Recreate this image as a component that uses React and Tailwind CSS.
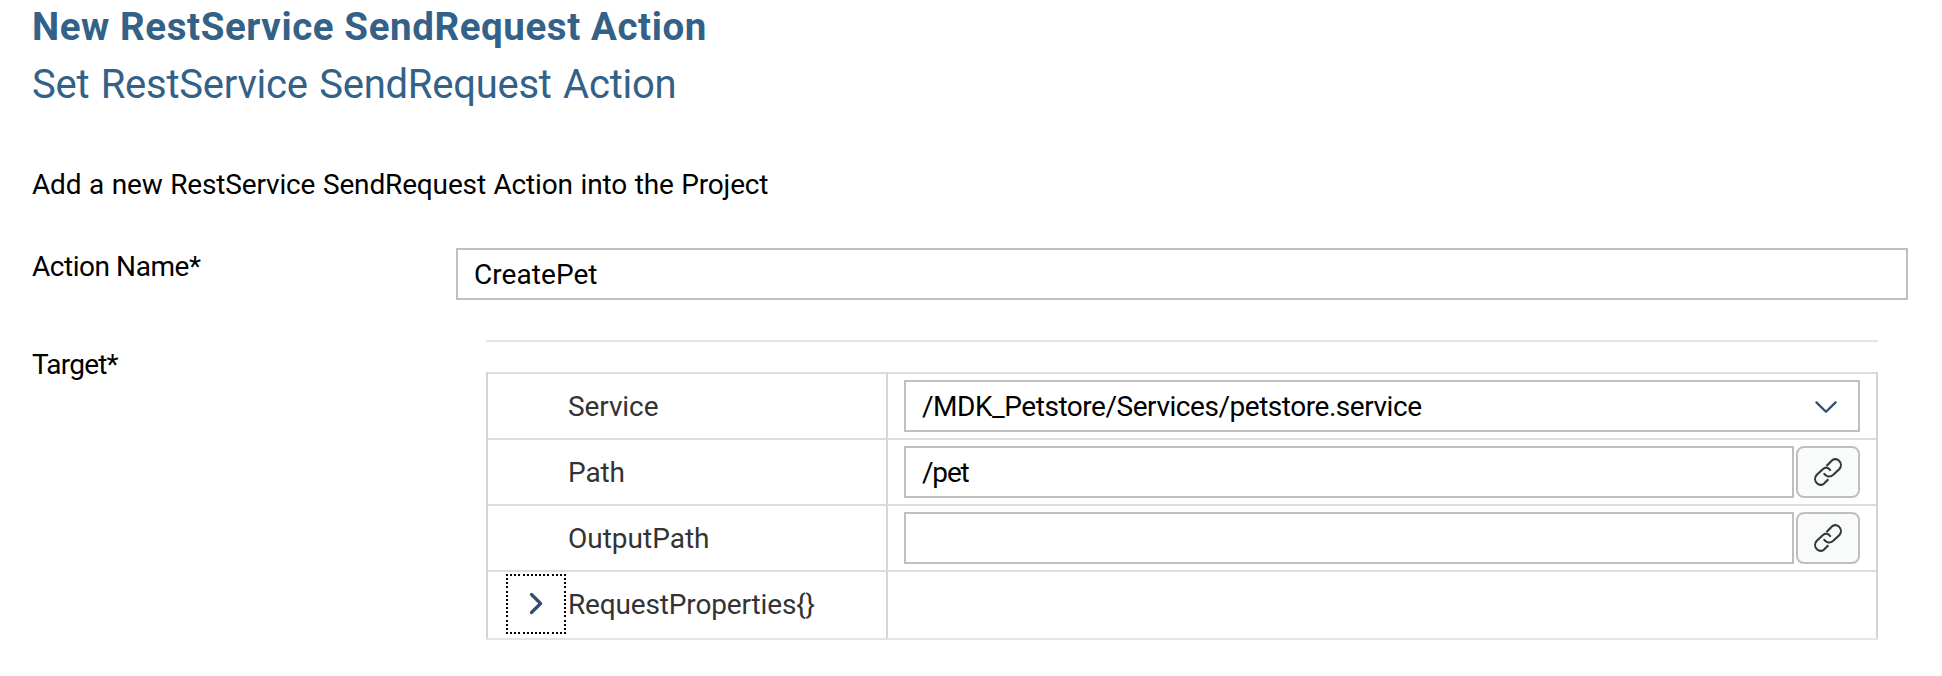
function ChevronDown() {
  return (
    <svg className="h-[14px] w-6" viewBox="0 0 24 14" fill="none" stroke="#2f5072" strokeWidth="2.3" strokeLinecap="round" strokeLinejoin="round">
      <path d="M2.4 2.4 12 11.8 21.6 2.4" />
    </svg>
  );
}

function LinkIcon() {
  return (
    <svg className="h-7 w-7" viewBox="0 0 28 28" fill="none" stroke="#32363a" strokeWidth="2.1">
      <path d="M12.5 8 17.2 3.2C19.2.7 22.5.5 24.8 2.5c2.7 2.5 2.7 6.2.4 8.7L19 17C16.2 19.4 12 19 9.8 15.2" />
      <path d="M14.4 21.2 10.8 24.8C8.8 27.3 5.5 27.5 3.2 25.5.5 23 .5 19.3 2.8 16.8L9 11c2.4-2 5.4-2 7.6 1.8" />
    </svg>
  );
}

function ExpandButton() {
  return (
    <button type="button" aria-label="Expand" className="block h-[60px] w-[60px]">
      <svg className="h-[60px] w-[60px]" viewBox="0 0 60 60" fill="none">
        <g stroke="#000" strokeWidth="2" strokeDasharray="2 2.143" shapeRendering="crispEdges">
          <path d="M0 1h60" />
          <path d="M0 59h60" />
          <path d="M1 0v60" />
          <path d="M59 0v60" />
        </g>
        <path d="M25.5 20.5 34.6 29.5 25.5 38.5" stroke="#2f5072" strokeWidth="3.2" strokeLinecap="round" strokeLinejoin="round" />
      </svg>
    </button>
  );
}

function LinkedField({ children }) {
  return (
    <div className="flex gap-[2px]">
      <div className="h-[52px] flex-1 border-2 border-[#bfbfbf] bg-white px-4 pt-2 leading-[33px]">{children}</div>
      <button type="button" aria-label="Bind" className="flex h-[52px] w-16 items-center justify-center rounded-lg border-2 border-[#bfbfbf] bg-[#f9fbfb]">
        <LinkIcon />
      </button>
    </div>
  );
}

function Row({ label, expander, children }) {
  return (
    <div className={`flex border-t-2 border-[#dcdcdc] ${expander ? "h-[68px]" : "h-[66px]"}`}>
      <div className="flex w-[400px] border-r-2 border-[#d6d6d6] text-[#333333]">
        <div className="w-20 shrink-0 pt-[2px] pl-[18px]">{expander && <ExpandButton />}</div>
        <div className="pt-4 leading-[33px]">{label}</div>
      </div>
      <div className="flex-1 px-4 pt-[6px]">{children}</div>
    </div>
  );
}

export default function App() {
  return (
    <main className="h-[676px] w-[1942px] bg-white pt-[5px] pr-[34px] pl-8 font-['Roboto',sans-serif] text-[28px] text-black">
      <h1 className="text-[38.5px] leading-[44px] font-bold tracking-[0.58px] text-[#346187]">New RestService SendRequest Action</h1>
      <h2 className="mt-3 text-[40px] leading-[47px] font-normal tracking-[-0.24px] text-[#346187] [word-spacing:1.7px]">Set RestService SendRequest Action</h2>
      <p className="mt-[60px] leading-[33px] tracking-[-0.15px] [word-spacing:0.8px]">Add a new RestService SendRequest Action into the Project</p>

      <div className="mt-[47px] flex">
        <div className="w-[424px] pt-[2px] leading-[33px] tracking-[-0.45px]">Action Name*</div>
        <div className="h-[52px] flex-1 border-2 border-[#bfbfbf] px-4 pt-2 leading-[33px] tracking-[0.06px]">CreatePet</div>
      </div>

      <div className="mt-10 flex">
        <div className="w-[454px] pt-2 leading-[33px] tracking-[-0.8px]">Target*</div>
        <div className="w-[1392px] border-t-2 border-[#e4e4e4] pt-[30px]">
          <div className="border-x-2 border-[#d4d4d4]">
            <Row label={<span className="tracking-[-0.1px]">Service</span>}>
              <div className="flex h-[52px] justify-between border-2 border-[#bfbfbf] pr-5 pl-4">
                <span className="pt-2 leading-[33px] tracking-[-0.46px]">/MDK_Petstore/Services/petstore.service</span>
                <span className="pt-[18px]"><ChevronDown /></span>
              </div>
            </Row>
            <Row label={<span className="tracking-[-0.1px]">Path</span>}>
              <LinkedField><span className="tracking-[-1.2px]">/pet</span></LinkedField>
            </Row>
            <Row label="OutputPath">
              <LinkedField />
            </Row>
            <Row expander label={<span className="tracking-[-0.15px]">RequestProperties&#123;&#125;</span>} />
          </div>
          <div className="h-[2px] bg-[#e4e4e4]" />
        </div>
      </div>
    </main>
  );
}
